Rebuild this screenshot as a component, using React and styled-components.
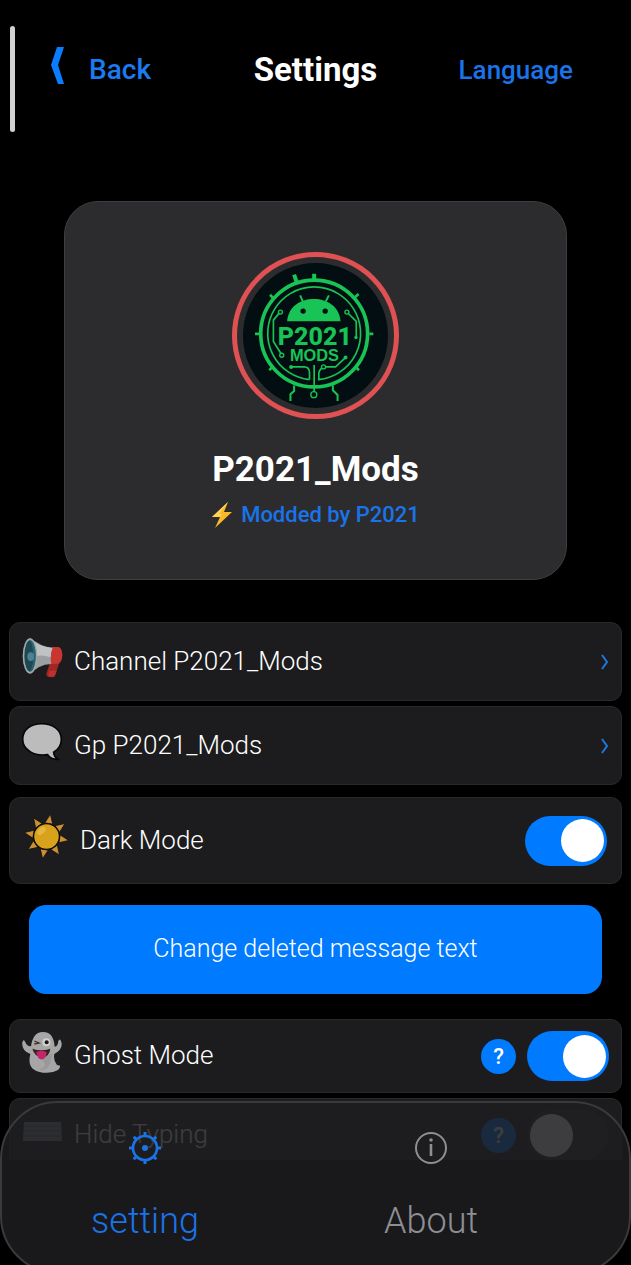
import React, {useState} from 'react'
import styled, {createGlobalStyle} from 'styled-components'

const GlobalStyle = createGlobalStyle`
	* {
		box-sizing: border-box;
	}
	body {
		margin: 0;
		background: #000;
		color: #fff;
		font-family: Roboto, "Noto Sans", sans-serif;
	}
	button {
		font: inherit;
		border: 0;
		padding: 0;
		background: none;
		cursor: pointer;
	}
	svg {
		display: block;
		flex: none;
	}
`

const Shell = styled.div`
	position: relative;
	display: flex;
	flex-direction: column;
	height: 100vh;
	overflow: hidden;
`

const ScrollThumb = styled.div`
	position: absolute;
	left: 10px;
	top: 26px;
	width: 5px;
	height: 106px;
	border-radius: 3px;
	background: #d2d2d2;
`

const Main = styled.main`
	flex: 1;
	min-height: 0;
	overflow: hidden;
`

const Header = styled.header`
	display: grid;
	grid-template-columns: 1fr auto 1fr;
	align-items: center;
	height: 139px;
	padding: 0 51px;
`

const BackButton = styled.button`
	justify-self: start;
	display: flex;
	align-items: center;
	gap: 25px;
	color: #1a7bf0;
	font-size: 28px;
	line-height: 36px;
	font-weight: 500;

	svg {
		margin-bottom: 8px;
	}
`

const Title = styled.h1`
	margin: 0;
	font-size: 33px;
	line-height: 40px;
	font-weight: 700;
`

const LanguageButton = styled.button`
	justify-self: end;
	padding: 0 7px;
	color: #1a73e8;
	font-size: 26px;
	line-height: 36px;
	font-weight: 500;
`

const Profile = styled.section`
	display: flex;
	flex-direction: column;
	align-items: center;
	margin: 62px 64px 42px;
	padding: 50px 0 48px;
	border: 1px solid #3e3e40;
	border-radius: 34px;
	background: #2c2c2e;
`

const Avatar = styled.div`
	padding: 6px;
	border: 5px solid #df5153;
	border-radius: 50%;
`

const ProfileName = styled.h2`
	margin: 28px 0 0;
	font-size: 35px;
	line-height: 46px;
	font-weight: 700;
`

const Tagline = styled.p`
	display: flex;
	align-items: center;
	gap: 8px;
	margin: 6px 0 0;
	color: #1a73e8;
	font-size: 22px;
	line-height: 32px;
	font-weight: 500;
`

const Group = styled.div`
	display: flex;
	flex-direction: column;
	gap: 5px;
	margin: 0 9px ${p => p.$space}px;
`

const Row = styled.div`
	display: flex;
	align-items: center;
	gap: 11px;
	height: ${p => p.$height}px;
	padding: 0 ${p => p.$inset || 12}px;
	border: 1px solid #29292b;
	border-radius: 11px;
	background: #1c1c1e;
	color: #fff;
	font-size: 26px;
	line-height: 36px;
	font-weight: 300;
	text-decoration: none;

	> svg:first-child {
		margin-bottom: 8px;
	}
`

const RowLabel = styled.label`
	flex: 1;
	padding-bottom: 2px;
`

const RowText = styled.span`
	flex: 1;
	padding-bottom: 2px;
`

const HelpButton = styled.button`
	width: 35px;
	height: 35px;
	border-radius: 50%;
	background: #007aff;
	color: #fff;
	font-size: 22px;
	line-height: 35px;
	font-weight: 500;
`

const Switch = styled.input`
	appearance: none;
	display: flex;
	align-items: center;
	flex: none;
	width: 82px;
	height: 50px;
	margin: 0;
	padding: 0 3px;
	border-radius: 25px;
	background: #2a2a2c;
	cursor: pointer;

	&::before {
		content: "";
		width: 43px;
		height: 43px;
		border-radius: 50%;
		background: #fff;
	}
	&:checked {
		justify-content: flex-end;
		background: #007aff;
	}
`

const WideButton = styled.button`
	display: block;
	width: calc(100% - 58px);
	height: 89px;
	margin: 0 29px 25px;
	padding-bottom: 2px;
	border-radius: 17px;
	background: #007aff;
	color: #fff;
	font-size: 25px;
	font-weight: 300;
`

const TabBar = styled.nav`
	position: relative;
	display: grid;
	grid-template-columns: 1fr 1fr;
	flex: none;
	height: 173px;
	margin: -59px 0 -9px;
	padding-right: 55px;
	border: 2px solid #3a3a3c;
	border-radius: 58px;
	background: rgba(29, 29, 31, 0.86);
`

const Tab = styled.a`
	display: flex;
	flex-direction: column;
	align-items: center;
	gap: 32px;
	padding-top: 28px;
	color: ${p => p.$active ? '#1a73e8' : '#8e8e93'};
	font-size: 36px;
	line-height: 48px;
	font-weight: 300;
	text-decoration: none;
`

const Logo = () => (
	<svg width="145" height="145" viewBox="69 69 434 434" role="img" aria-label="P2021 Mods logo">
		<circle cx="286" cy="286" r="217" fill="#020e11" />
		<g fill="none" stroke="#18c455">
			<circle cx="282" cy="280" r="160" strokeWidth="11" />
			<path d="M268 418V396Q267 380 252 380H214M268 418A139 139 0 1 1 296 418V400Q296 388 310 380" strokeWidth="5" />
			<path d="M310 380H346L374 354M282 374V454" strokeWidth="5" />
			<path d="M180 216L160 240V304L184 342M382 218L408 244V290" strokeWidth="5" />
			<path d="M222 436V452L211 462V482M338 436V450L352 464V482" strokeWidth="6" />
			<path d="M229 125L222 104M282 121V101" strokeWidth="12" />
			<path d="M160 175L150 164M403 172L415 162M118 281H105M447 281H459M158 378L148 390M406 379L416 390" strokeWidth="8" />
			<path d="M248 184L240 166M317 184L326 166" strokeWidth="6" />
		</g>
		<g fill="#020e11" stroke="#18c455" strokeWidth="4">
			<circle cx="181" cy="216" r="6" />
			<circle cx="380" cy="216" r="6" />
			<circle cx="185" cy="345" r="6" />
			<circle cx="310" cy="380" r="6" />
			<circle cx="281" cy="463" r="9" />
		</g>
		<g fill="#18c455">
			<circle cx="407" cy="292" r="5" />
			<circle cx="376" cy="352" r="6" />
			<circle cx="213" cy="380" r="6" />
			<path d="M201 243C205 200 240 177 281 177S357 200 361 243Z" />
			<text x="284" y="313" textAnchor="middle" fontFamily="Roboto, sans-serif" fontWeight="800" fontSize="75">P2021</text>
			<text x="283" y="363" textAnchor="middle" fontFamily="Liberation Sans, sans-serif" fontWeight="700" fontSize="49">MODS</text>
		</g>
		<circle cx="249" cy="213" r="8" fill="#020e11" />
		<circle cx="315" cy="213" r="8" fill="#020e11" />
	</svg>
)

const BackIcon = () => (
	<svg width="13" height="37" viewBox="0 0 13 37">
		<path d="M6 0H13L7 18L13 37H7L0 18Z" fill="#0a7cff" />
	</svg>
)

const BoltIcon = () => (
	<svg width="22" height="26" viewBox="0 0 22 26">
		<path d="M17 0L1 15L9 15L4 26L21 10L13 10Z" fill="#fbb928" />
		<path d="M17 0L1 15L9 15L11 12L8 12Z" fill="#fdd35a" />
	</svg>
)

const MegaphoneIcon = () => (
	<svg width="41" height="40" viewBox="0 0 123 120">
		<path d="M88 62L74 104Q70 113 80 116L93 118Q100 116 102 106L116 60Z" fill="#9f2724" />
		<path d="M82 98L104 98L98 113Q94 119 78 115Z" fill="#c0302c" />
		<path d="M90 27H110Q121 31 121 52Q120 76 106 78L83 77Z" fill="#c93530" />
		<path d="M24 1Q38 10 58 21Q72 28 92 29Q83 52 88 78Q68 78 50 88Q36 97 24 107Z" fill="#9c9fa1" />
		<path d="M38 12Q54 25 91 30Q86 43 86 58Q62 50 44 54Z" fill="#bfc1c2" />
		<ellipse cx="24" cy="54" rx="22" ry="53" fill="#9ea9ac" />
		<ellipse cx="24" cy="54" rx="17" ry="47" fill="#1d4953" />
		<path d="M24 7Q41 14 41 54Q40 92 24 101Q35 80 34 54Q34 25 24 7Z" fill="#2b6674" />
		<ellipse cx="26" cy="56" rx="10" ry="13" fill="#4e8290" />
	</svg>
)

const BubbleIcon = () => (
	<svg width="41" height="38" viewBox="0 0 123 114">
		<path d="M59 2C92 2 118 20 118 49C118 67 109 80 95 88Q96 101 108 109Q87 110 77 95C36 101 2 80 2 49C2 20 26 2 59 2Z" fill="#bcbcbc" stroke="#070707" strokeWidth="5" />
	</svg>
)

const SunIcon = () => (
	<svg width="45" height="45" viewBox="-68 -68 136 136">
		<g fill="#cc8f35" stroke="#0e0b07" strokeWidth="2">
			{[10, 55, 100, 145, 190, 235, 280, 325].map(a => (
				<path key={a} transform={`rotate(${a})`} d="M-12 -40L0 -68L12 -40Z" />
			))}
		</g>
		<circle r="39" fill="#d9a21c" stroke="#0e0b07" strokeWidth="4" />
		<ellipse cx="-15" cy="-17" rx="15" ry="9" transform="rotate(-42 -15 -17)" fill="#e4b83f" />
	</svg>
)

const GhostIcon = () => (
	<svg width="41" height="41" viewBox="0 0 123 123">
		<path d="M63 0C87 0 96 18 98 44Q108 43 109 27Q113 18 117 27Q126 50 97 66Q93 84 105 99Q122 99 108 114Q84 128 50 119C22 111 19 90 25 66Q-2 56 1 31Q5 18 10 31Q15 44 27 43C31 18 40 0 63 0Z" fill="#a6a6a6" />
		<path d="M48 68Q68 78 92 64L84 96Q72 120 50 113Q76 106 66 90Z" fill="#999" />
		<circle cx="73" cy="31" r="12" fill="#d0d0d0" />
		<circle cx="74" cy="31" r="6" fill="#191919" />
		<path d="M37 27L51 33L37 36" fill="none" stroke="#4b2d2a" strokeWidth="4" />
		<path d="M31 50Q57 60 85 50Q83 74 59 77Q37 72 31 50Z" fill="#3b1f20" />
		<path d="M42 61Q58 51 74 61L71 75Q65 84 55 82Q47 80 47 72Z" fill="#c5246b" />
	</svg>
)

const KeyboardIcon = () => (
	<svg width="41" height="21" viewBox="0 0 41 21">
		<path d="M2 1H39L40 20H1Z" fill="#84909b" />
		<path d="M3 5H38M2 10H39M2 15H39" stroke="#5b6267" />
	</svg>
)

const ChevronIcon = () => (
	<svg width="8" height="16" viewBox="0 0 8 16">
		<path d="M1 1L6 8L1 15" fill="none" stroke="#1f78dc" strokeWidth="2" />
	</svg>
)

const GearIcon = () => (
	<svg width="34" height="34" viewBox="-17 -17 34 34" stroke="currentColor">
		<circle r="12" fill="none" strokeWidth="2.6" />
		<circle r="3" fill="currentColor" stroke="none" />
		{[0, 45, 90, 135, 180, 225, 270, 315].map(a => (
			<path key={a} transform={`rotate(${a})`} d="M0 -12V-16" strokeWidth="3" />
		))}
	</svg>
)

const InfoIcon = () => (
	<svg width="34" height="34" viewBox="-17 -17 34 34">
		<circle r="15" fill="none" stroke="currentColor" strokeWidth="2" />
		<path d="M0 -4V8" stroke="currentColor" strokeWidth="2.6" />
		<circle cy="-8" r="1.8" fill="currentColor" />
	</svg>
)

function LinkRow({icon, children}) {
	return (
		<Row as="a" href="#" $height={79}>
			{icon}
			<RowText>{children}</RowText>
			<ChevronIcon />
		</Row>
	)
}

function SwitchRow({id, icon, height, inset, help, initial = false, children}) {
	const [on, setOn] = useState(initial)

	return (
		<Row $height={height} $inset={inset}>
			{icon}
			<RowLabel htmlFor={id}>{children}</RowLabel>
			{help && <HelpButton type="button">?</HelpButton>}
			<Switch id={id} type="checkbox" checked={on} onChange={e => setOn(e.target.checked)} />
		</Row>
	)
}

export default function App() {
	return (
		<Shell>
			<GlobalStyle />
			<Main>
				<Header>
					<BackButton type="button"><BackIcon />Back</BackButton>
					<Title>Settings</Title>
					<LanguageButton type="button">Language</LanguageButton>
				</Header>
				<Profile>
					<Avatar><Logo /></Avatar>
					<ProfileName>P2021_Mods</ProfileName>
					<Tagline><BoltIcon />Modded by P2021</Tagline>
				</Profile>
				<Group $space={12}>
					<LinkRow icon={<MegaphoneIcon />}>Channel P2021_Mods</LinkRow>
					<LinkRow icon={<BubbleIcon />}>Gp P2021_Mods</LinkRow>
				</Group>
				<Group $space={21}>
					<SwitchRow id="dark" icon={<SunIcon />} height={87} inset={14} initial>Dark Mode</SwitchRow>
				</Group>
				<WideButton type="button">Change deleted message text</WideButton>
				<Group $space={0}>
					<SwitchRow id="ghost" icon={<GhostIcon />} height={74} help initial>Ghost Mode</SwitchRow>
					<SwitchRow id="typing" icon={<KeyboardIcon />} height={74} help>Hide Typing</SwitchRow>
				</Group>
			</Main>
			<TabBar>
				<Tab href="#setting" $active><GearIcon />setting</Tab>
				<Tab href="#about"><InfoIcon />About</Tab>
			</TabBar>
			<ScrollThumb />
		</Shell>
	)
}
